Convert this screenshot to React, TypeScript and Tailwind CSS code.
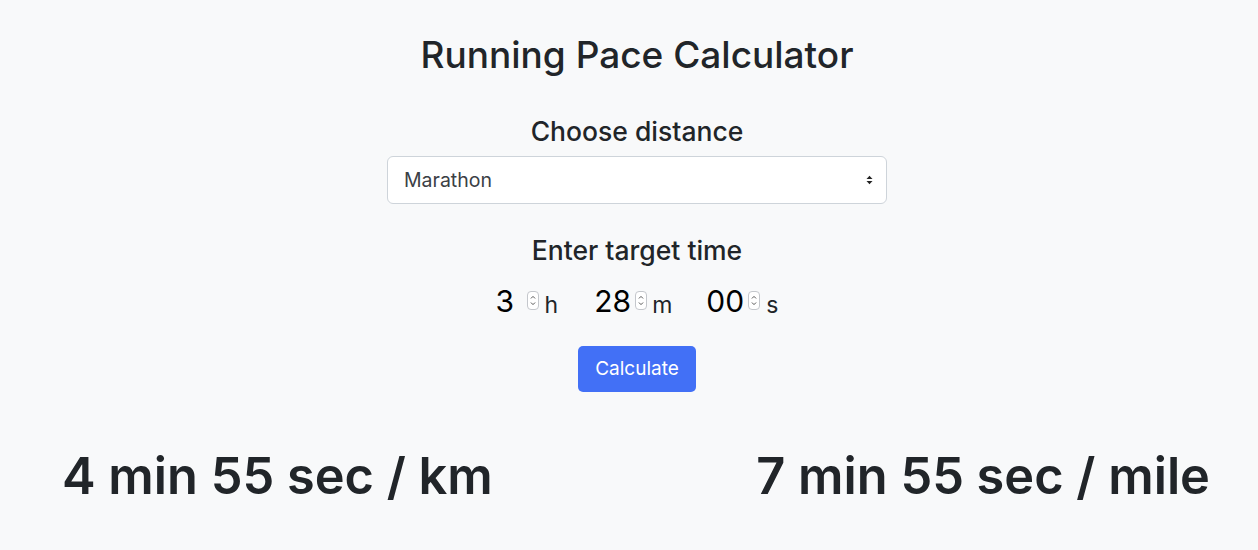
import React from "react";

function Spinner() {
  return (
    <span className="flex h-[19px] w-[12px] items-center justify-center rounded-[4px] border border-[#c4c7cc] bg-white">
      <svg width="6" height="13" viewBox="0 0 6 13" fill="none" stroke="#555" strokeWidth="1" strokeLinecap="round" strokeLinejoin="round">
        <path d="M1.2 4.2 L3 2.4 L4.8 4.2" />
        <path d="M1.2 8.8 L3 10.6 L4.8 8.8" />
      </svg>
    </span>
  );
}

export default function App() {
  return (
    <div
      className="min-h-[550px] w-full bg-[#f8f9fa] text-[#212529]"
      style={{ fontFamily: "Inter, 'Noto Sans', sans-serif" }}
    >
      <div className="flex flex-col items-center pl-[16px] pt-[33px]">
        <h1 className="text-[37px] font-medium leading-[1.2]">Running Pace Calculator</h1>
        <h2 className="mt-[39px] text-[26.5px] font-medium leading-[1.2]">Choose distance</h2>
        <div className="relative mt-[8px] h-[48px] w-[500px] rounded-[6px] border border-[#ced4da] bg-white">
          <div className="flex h-full items-center px-[16px] text-[19.5px] text-[#3b4045]">Marathon</div>
          <svg className="absolute right-[13px] top-[18px]" width="7" height="10" viewBox="0 0 7 10" fill="#222">
            <path d="M0.5 4 L3.5 0.8 L6.5 4 Z" />
            <path d="M0.5 6 L3.5 9.2 L6.5 6 Z" />
          </svg>
        </div>
        <h2 className="mt-[31px] text-[26.5px] font-medium leading-[1.2]">Enter target time</h2>
        <div className="mt-[16px] flex h-[36px] items-center text-black">
          <span className="w-[31px] text-[30px] leading-none">3</span>
          <Spinner />
          <span className="ml-[6px] translate-y-[5px] text-[23px] leading-none text-[#212529]">h</span>
          <span className="ml-[36px] w-[41px] text-[30px] leading-none">28</span>
          <Spinner />
          <span className="ml-[5px] translate-y-[5px] text-[23px] leading-none text-[#212529]">m</span>
          <span className="ml-[34px] w-[42px] text-[30px] leading-none">00</span>
          <Spinner />
          <span className="ml-[6px] translate-y-[5px] text-[23px] leading-none text-[#212529]">s</span>
        </div>
        <button className="mt-[27px] h-[46px] rounded-[5px] bg-[#4270f6] px-[17px] text-[19px] text-white">
          Calculate
        </button>
      </div>
      <div className="mt-[54px] flex justify-between pl-[62px] pr-[48px]">
        <div className="text-[50.5px] font-semibold leading-[1.2]">4 min 55 sec / km</div>
        <div className="text-[50.5px] font-semibold leading-[1.2]">7 min 55 sec / mile</div>
      </div>
    </div>
  );
}
